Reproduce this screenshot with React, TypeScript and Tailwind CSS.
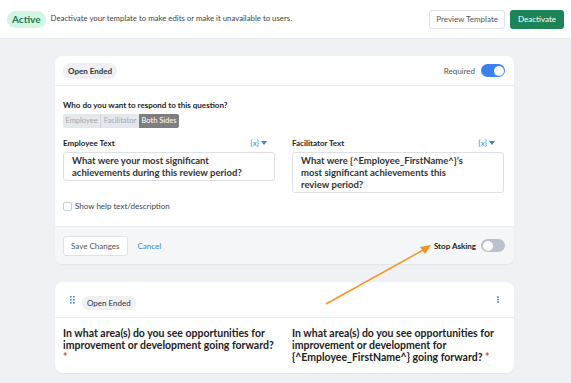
const font = { fontFamily: '"Lato", "Noto Sans", sans-serif' };

const Toggle = ({ on }: { on: boolean }) => (
    <div className={`w-[24px] h-[13px] rounded-full p-[1.5px] flex ${on ? 'bg-[#3b82f0] justify-end' : 'bg-[#b9c1cd] justify-start'}`}>
        <div className="w-[10px] h-[10px] rounded-full bg-white" />
    </div>
);

const VarPicker = () => (
    <div className="flex items-center gap-[2px] text-[#3d7fe0] text-[8px]">
        <span>{'{x}'}</span>
        <svg width="6" height="4" viewBox="0 0 6 4"><path d="M0 0 L6 0 L3 4 Z" fill="#3d7fe0" /></svg>
    </div>
);

const Pill = ({ children, bold }: { children: string; bold?: boolean }) => (
    <span className={`rounded-full bg-[#eef0f3] px-[5px] py-[2px] text-[8px] text-[#333] ${bold ? 'font-bold' : ''}`}>{children}</span>
);

const App = () => {
    return (
        <div className="relative w-[571px] h-[383px] overflow-hidden bg-[#f0f1f4]" style={font}>
            <div className="h-[39px] bg-white border-b border-[#e6e8ec] flex items-center px-[7px]">
                <span className="rounded-full bg-[#d3f5e3] text-[#1d7a4d] font-bold text-[10px] px-[5px] py-[1px]">Active</span>
                <span className="ml-[5px] text-[7.8px] text-[#444]">Deactivate your template to make edits or make it unavailable to users.</span>
                <div className="ml-auto flex gap-[5px]">
                    <button className="h-[19px] px-[6px] rounded-[3px] border border-[#dfe2e6] bg-white text-[8px] text-[#555]">Preview Template</button>
                    <button className="h-[19px] px-[8px] rounded-[3px] bg-[#1d8457] text-[8px] text-white">Deactivate</button>
                </div>
            </div>

            <div className="pl-[55px] w-[514px] pt-[17px] flex flex-col gap-[18px]">
                <div className="bg-white rounded-[8px] shadow-[0_1px_2px_rgba(0,0,0,0.06)]">
                    <div className="h-[30px] border-b border-[#eceef1] flex items-center pl-[8px] pr-[9px]">
                        <Pill bold>Open Ended</Pill>
                        <span className="ml-auto mr-[6px] text-[8px] text-[#555]">Required</span>
                        <Toggle on />
                    </div>
                    <div className="pl-[8px] pr-[10px] pt-[13px] pb-[14px]">
                        <div className="h-[12px] leading-[12px] text-[8px] font-bold text-[#222]">Who do you want to respond to this question?</div>
                        <div className="mt-[3px] flex w-fit rounded-[2px] overflow-hidden text-[7.5px]">
                            <span className="w-[38px] h-[14px] flex items-center justify-center bg-[#e4e7ec] text-[#a3a9b2] border-r border-[#d4d8de]">Employee</span>
                            <span className="w-[38px] h-[14px] flex items-center justify-center bg-[#e4e7ec] text-[#a3a9b2]">Facilitator</span>
                            <span className="w-[40px] h-[14px] flex items-center justify-center bg-[#7e7e7e] text-white">Both Sides</span>
                        </div>
                        <div className="mt-[9px] grid grid-cols-2 gap-[17px]">
                            <div>
                                <div className="h-[12px] flex items-center justify-between pr-[8px]">
                                    <span className="text-[8px] font-bold text-[#222]">Employee Text</span>
                                    <VarPicker />
                                </div>
                                <div className="mt-[3px] border border-[#dde1e6] rounded-[3px] px-[8px] pt-[2px] pb-[1px] text-[9.5px] leading-[12px] font-bold text-[#333]">
                                    What were your most significant<br />achievements during this review period?
                                </div>
                            </div>
                            <div>
                                <div className="h-[12px] flex items-center justify-between pr-[9px]">
                                    <span className="text-[8px] font-bold text-[#222]">Facilitator Text</span>
                                    <VarPicker />
                                </div>
                                <div className="mt-[3px] border border-[#dde1e6] rounded-[3px] px-[8px] pt-[2px] pb-[1px] text-[9.5px] leading-[12px] font-bold text-[#333]">
                                    What were {'{^Employee_FirstName^}'}’s<br />most significant achievements this<br />review period?
                                </div>
                            </div>
                        </div>
                        <label className="mt-[7px] h-[12px] flex items-center gap-[3px] text-[8px] text-[#444]">
                            <span className="w-[9px] h-[9px] border border-[#c9ced5] rounded-[2px] bg-white" />
                            Show help text/description
                        </label>
                    </div>
                    <div className="h-[38px] bg-[#f5f6f8] border-t border-[#eceef1] rounded-b-[8px] flex items-center pl-[8px] pr-[9px]">
                        <button className="h-[20px] px-[7px] rounded-[3px] border border-[#dfe2e6] bg-white text-[8px] text-[#555]">Save Changes</button>
                        <span className="ml-[10px] text-[8px] text-[#3d7fe0]">Cancel</span>
                        <span className="ml-auto mr-[5px] text-[8px] font-bold text-[#222]">Stop Asking</span>
                        <Toggle on={false} />
                    </div>
                </div>

                <div className="bg-white rounded-[8px] shadow-[0_1px_2px_rgba(0,0,0,0.06)]">
                    <div className="h-[36px] border-b border-[#eceef1] flex items-center pl-[15px] pr-[15px]">
                        <svg width="5" height="8" viewBox="0 0 5 8">
                            {[0, 3, 6].map(y => [0, 3].map(x => <rect key={`${x}-${y}`} x={x} y={y} width="1.6" height="1.6" fill="#3d7fe0" />))}
                        </svg>
                        <span className="ml-[7px]"><Pill>Open Ended</Pill></span>
                        <svg className="ml-auto" width="2" height="7" viewBox="0 0 2 7">
                            <circle cx="1" cy="1" r="0.9" fill="#3d7fe0" /><circle cx="1" cy="3.5" r="0.9" fill="#3d7fe0" /><circle cx="1" cy="6" r="0.9" fill="#3d7fe0" />
                        </svg>
                    </div>
                    <div className="pl-[8px] pr-[10px] pt-[9px] pb-[10px] grid grid-cols-2 gap-[17px] text-[10.5px] leading-[12px] font-bold text-[#222]">
                        <div>In what area(s) do you see opportunities for improvement or development going forward?<br /><span className="text-[#e53935]">*</span></div>
                        <div>In what area(s) do you see opportunities for improvement or development for {'{^Employee_FirstName^}'} going forward? <span className="text-[#e53935]">*</span></div>
                    </div>
                </div>
            </div>

            <svg className="absolute left-0 top-0 pointer-events-none" width="571" height="383">
                <line x1="326" y1="304" x2="425" y2="249" stroke="#f7941d" strokeWidth="1.5" />
                <path d="M431 245 L420 247 L425 254 Z" fill="#f7941d" />
            </svg>
        </div>
    );
};

export default App;
